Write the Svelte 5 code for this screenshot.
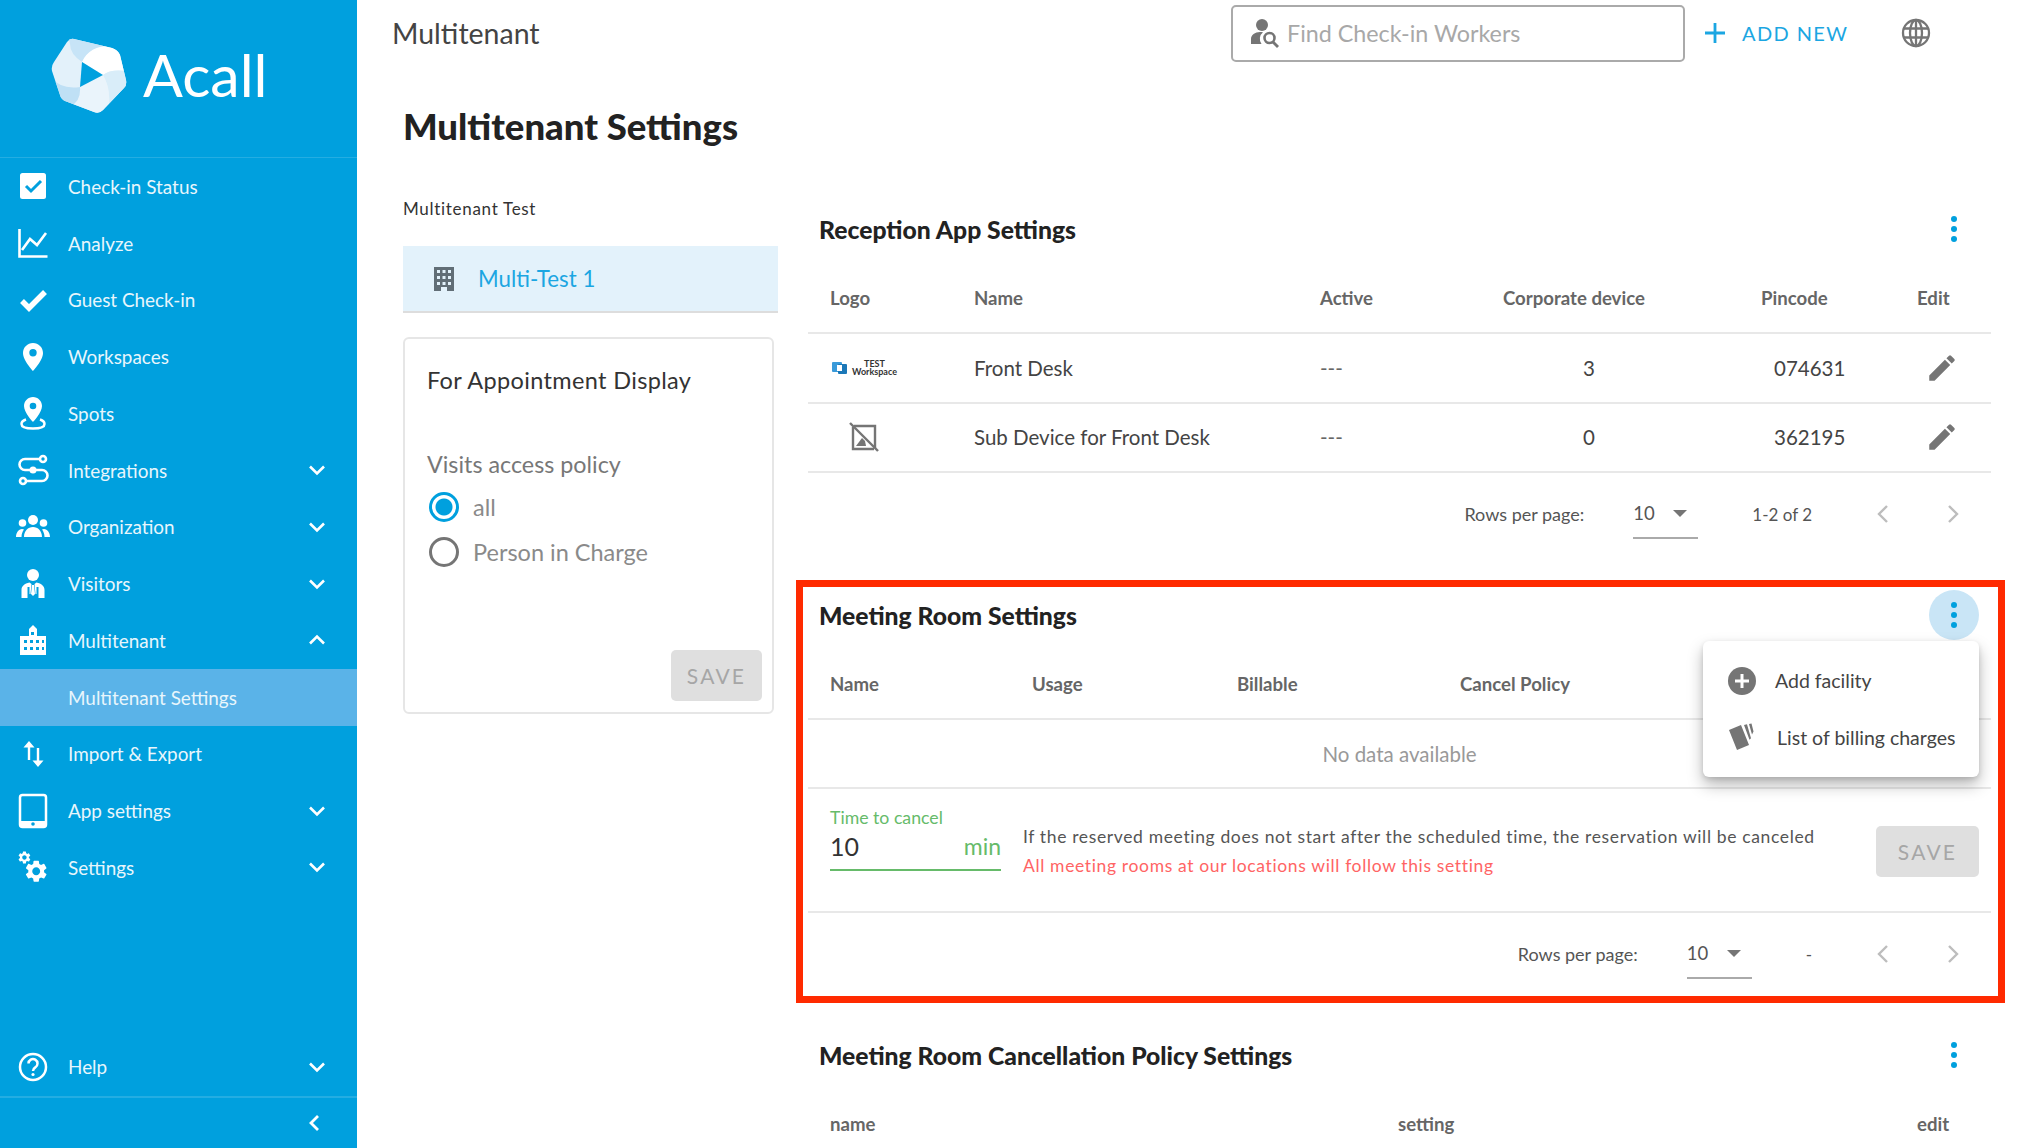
<script>
  const nav = [
    { icon: "status", label: "Check-in Status" },
    { icon: "analyze", label: "Analyze" },
    { icon: "check", label: "Guest Check-in" },
    { icon: "pin", label: "Workspaces" },
    { icon: "spot", label: "Spots" },
    { icon: "integrations", label: "Integrations", caret: "down" },
    { icon: "organization", label: "Organization", caret: "down" },
    { icon: "visitors", label: "Visitors", caret: "down" },
    { icon: "building", label: "Multitenant", caret: "up" },
    { label: "Multitenant Settings", active: true },
    { icon: "transfer", label: "Import & Export" },
    { icon: "phone", label: "App settings", caret: "down" },
    { icon: "gears", label: "Settings", caret: "down" }
  ];

  const gear = "M19.14 12.94c.04-.3.06-.61.06-.94 0-.32-.02-.64-.07-.94l2.03-1.58a.49.49 0 0 0 .12-.61l-1.92-3.32a.488.488 0 0 0-.59-.22l-2.39.96c-.5-.38-1.03-.7-1.62-.94l-.36-2.54a.484.484 0 0 0-.48-.41h-3.84c-.24 0-.43.17-.47.41l-.36 2.54c-.59.24-1.13.57-1.62.94l-2.39-.96c-.22-.08-.47 0-.59.22L2.74 8.87c-.12.21-.08.47.12.61l2.03 1.58c-.05.3-.09.63-.09.94s.02.64.07.94l-2.03 1.58a.49.49 0 0 0-.12.61l1.92 3.32c.12.22.37.29.59.22l2.39-.96c.5.38 1.03.7 1.62.94l.36 2.54c.05.24.24.41.48.41h3.84c.24 0 .44-.17.47-.41l.36-2.54c.59-.24 1.13-.56 1.62-.94l2.39.96c.22.08.47 0 .59-.22l1.92-3.32c.12-.22.07-.47-.12-.61l-2.01-1.58zM12 15.6c-1.98 0-3.6-1.62-3.6-3.6s1.62-3.6 3.6-3.6 3.6 1.62 3.6 3.6-1.62 3.6-3.6 3.6z";
  const pencil = "M3 17.25V21h3.75L17.81 9.94l-3.75-3.75L3 17.25zM20.71 7.04a1 1 0 0 0 0-1.41l-2.34-2.34a1 1 0 0 0-1.41 0l-1.83 1.83 3.75 3.75 1.83-1.83z";
</script>

{#snippet navIcon(name)}
  <svg class="nav-icon" viewBox="0 0 34 36" fill="#fff">
    {#if name === "status"}
      <rect x="4" y="5" width="26" height="26" rx="2.5" />
      <path d="M10 18l5 5 10-10" fill="none" stroke="#00a0de" stroke-width="3" />
    {:else if name === "analyze"}
      <path d="M3.5 4v27.5H31.5" fill="none" stroke="#fff" stroke-width="2.6" />
      <path d="M6 25l8-11 7 6 9-12" fill="none" stroke="#fff" stroke-width="2.6" />
    {:else if name === "check"}
      <path d="M6 19l7 7L29 10" fill="none" stroke="#fff" stroke-width="5.5" />
    {:else if name === "pin"}
      <path fill-rule="evenodd" d="M17 4C11.5 4 7 8.4 7 14c0 7.5 10 18 10 18s10-10.500 10-18C27 8.400 22.500 4 17 4zm0 13.500a3.700 3.700 0 1 1 0-7.400 3.700 3.700 0 0 1 0 7.400z" />
    {:else if name === "spot"}
      <path fill-rule="evenodd" d="M17 2c-5 0-9 4-9 9 0 6.500 9 16 9 16s9-9.500 9-16c0-5-4-9-9-9zm0 12.300a3.300 3.300 0 1 1 0-6.600 3.300 3.300 0 0 1 0 6.600z" />
      <path d="M10 24.500c-3 1-4.500 2.500-4.500 4.500 0 3 5 4.500 11.500 4.500s11.500-1.500 11.500-4.500c0-2-1.500-3.500-4.500-4.500" fill="none" stroke="#fff" stroke-width="2.500" />
    {:else if name === "integrations"}
      <g fill="none" stroke="#fff" stroke-width="2.600">
        <path d="M24 7H9a5.500 5.500 0 0 0 0 11h17a5.500 5.500 0 0 1 0 11H10" />
        <circle cx="27" cy="7" r="3" />
        <circle cx="7" cy="29" r="3" />
      </g>
      <circle cx="17" cy="18" r="3.500" />
    {:else if name === "organization"}
      <circle cx="17" cy="11" r="5" />
      <circle cx="6.500" cy="14" r="3.800" />
      <circle cx="27.500" cy="14" r="3.800" />
      <path d="M8 28c0-6 4-10 9-10s9 4 9 10zM0 28c0-4 2.500-8 6-8 1 0 1.500.2 2 .5-1.500 2-2.500 4.500-2.500 7.500zM34 28c0-4-2.500-8-6-8-1 0-1.500.2-2 .5 1.500 2 2.500 4.500 2.500 7.500z" />
    {:else if name === "visitors"}
      <circle cx="17" cy="9" r="6" />
      <path d="M5.500 32v-8c0-4 3-6.500 8-7.500l2 1.500-1 10h-1v-7h-2v11zM28.500 32v-8c0-4-3-6.500-8-7.500l-2 1.500 1 10h1v-7h2v11zM16 19h2l1 9-2 2-2-2z" />
    {:else if name === "building"}
      <path fill-rule="evenodd" d="M4 33V14h9V7l4-4 4 4v7h9v19zM8 18v3h3v-3zm6 0v3h3v-3zm6 0v3h3v-3zm6 0v3h2v-3zM8 25v3h3v-3zm6 0v3h3v-3zm6 0v3h3v-3zm6 0v3h2v-3zM15 10v3h3v-3z" />
    {:else if name === "transfer"}
      <path d="M13 24V10M22 12v14" fill="none" stroke="#fff" stroke-width="2.400" />
      <path d="M13 5l5.500 6.500h-11zM22 31l5.500-6.500h-11z" />
    {:else if name === "phone"}
      <rect x="4" y="2" width="26" height="32" rx="2.500" fill="none" stroke="#fff" stroke-width="2.500" />
      <path d="M4 28h26v6H4z" />
      <circle cx="17" cy="31" r="1.800" fill="#00a0de" />
    {:else if name === "gears"}
      <path d={gear} transform="translate(1 1) scale(.62)" />
      <path d={gear} transform="translate(7 9) scale(1.100)" />
    {:else if name === "help"}
      <circle cx="17" cy="18" r="13" fill="none" stroke="#fff" stroke-width="2.500" />
      <path d="M12.500 14.500a4.500 4.500 0 1 1 6.800 3.900c-1.500.9-2.300 1.700-2.300 3.600" fill="none" stroke="#fff" stroke-width="2.500" />
      <circle cx="17" cy="25.500" r="1.600" />
    {/if}
  </svg>
{/snippet}

{#snippet caret(dir)}
  <svg class="caret" class:up={dir === "up"} viewBox="0 0 18 12">
    <path d="M2 2.500l7 7 7-7" fill="none" stroke="#fff" stroke-width="2.600" />
  </svg>
{/snippet}

{#snippet kebab(open)}
  <button class="kebab" class:open aria-label="More">
    <i></i><i></i><i></i>
  </button>
{/snippet}

{#snippet pager(range)}
  <div class="pager">
    <span>Rows per page:</span>
    <div class="select">
      <span>10</span>
      <svg width="14" height="7" viewBox="0 0 14 7"><path d="M0 0h14L7 7z" fill="#757575" /></svg>
    </div>
    <span class="range">{range}</span>
    <svg class="page-arrow" width="12" height="20" viewBox="0 0 12 20"><path d="M10 2l-8 8 8 8" fill="none" stroke="#bdbdbd" stroke-width="2.400" /></svg>
    <svg class="page-arrow" width="12" height="20" viewBox="0 0 12 20"><path d="M2 2l8 8-8 8" fill="none" stroke="#bdbdbd" stroke-width="2.400" /></svg>
  </div>
{/snippet}

{#snippet editIcon()}
  <svg width="34" height="34" viewBox="0 0 24 24"><path d={pencil} fill="#757575" /></svg>
{/snippet}

<div class="app">
  <aside class="sidebar">
    <div class="brand">
      <svg width="84" height="84" viewBox="46 33 84 84">
        <defs>
          <clipPath id="logo-shape">
            <path d="M74 39L112 48Q118 50 120 55L126 80Q127 85 124 88L103 110Q99 114 94 112L65 101Q61 99 60 95L52 71Q51 66 54 62L67 42Q70 38 74 39Z" />
          </clipPath>
        </defs>
        <g clip-path="url(#logo-shape)">
          <rect x="46" y="33" width="84" height="84" fill="#e3f1fa" />
          <path d="M68 36H120L116 46Q92 44 82 62Q70 54 70 44Z" fill="#c7e4f7" />
          <path d="M82 62Q90 44 116 46L130 72Q114 68 103 75Z" fill="#fff" />
          <path d="M103 75Q112 68 130 72V95L107 116Q113 92 103 75Z" fill="#d9edf9" />
          <path d="M103 75Q113 92 107 116H88L70 106Q81 102 80 87Z" fill="#eaf4fb" />
          <path d="M80 87Q81 102 70 106L58 104L50 76Q60 90 80 87Z" fill="#bfe0f5" />
          <path d="M82 62L103 75L80 87Z" fill="#00a0de" />
        </g>
      </svg>
      <span class="brand-name">Acall</span>
    </div>

    <nav class="nav">
      {#each nav as item}
        <div class="nav-item" class:active={item.active}>
          <span class="nav-icon-slot">
            {#if item.icon}{@render navIcon(item.icon)}{/if}
          </span>
          <span class="nav-label">{item.label}</span>
          {#if item.caret}{@render caret(item.caret)}{/if}
        </div>
      {/each}
    </nav>

    <div class="sidebar-foot">
      <div class="nav-item">
        <span class="nav-icon-slot">{@render navIcon("help")}</span>
        <span class="nav-label">Help</span>
        {@render caret("down")}
      </div>
      <div class="collapse">
        <svg width="12" height="18" viewBox="0 0 12 18"><path d="M10 2L3 9l7 7" fill="none" stroke="#fff" stroke-width="2.800" /></svg>
      </div>
    </div>
  </aside>

  <div class="main">
    <header class="topbar">
      <div class="crumb">Multitenant</div>
      <div class="search">
        <svg width="32" height="32" viewBox="0 0 32 32" fill="#757575">
          <circle cx="13" cy="8" r="6" />
          <path d="M2 27v-5c0-4 4-7 9-7 1 0 2 .1 3 .3a8.500 8.500 0 0 0-1.500 11.700z" />
          <circle cx="20.500" cy="21" r="5" fill="none" stroke="#757575" stroke-width="2.600" />
          <path d="M24 25l5 5" stroke="#757575" stroke-width="2.800" />
        </svg>
        <span>Find Check-in Workers</span>
      </div>
      <div class="add-new">
        <svg width="22" height="22" viewBox="0 0 22 22"><path d="M11 1v20M1 11h20" stroke="#1ba6e2" stroke-width="2.800" /></svg>
        <span>ADD NEW</span>
      </div>
      <svg class="globe" width="30" height="30" viewBox="0 0 30 30" fill="none" stroke="#757575" stroke-width="2.300">
        <circle cx="15" cy="15" r="13" />
        <ellipse cx="15" cy="15" rx="6" ry="13" />
        <path d="M3 10.500h24M3 19.500h24M15 2v26" />
      </svg>
    </header>

    <main class="content">
      <h1>Multitenant Settings</h1>
      <div class="columns">
        <div class="left">
          <div class="group-label">Multitenant Test</div>
          <div class="tenant">
            <svg width="20" height="24" viewBox="0 0 20 24">
              <path fill="#616e76" fill-rule="evenodd" d="M0 0h20v24H13v-4H7v4H0zM3 3v3h3V3zm5.500 0v3h3V3zM14 3v3h3V3zM3 9v3h3V9zm5.500 0v3h3V9zM14 9v3h3V9zM3 15v3h3v-3zm5.500 0v3h3v-3zM14 15v3h3v-3z" />
            </svg>
            <span>Multi-Test 1</span>
          </div>
          <div class="policy-card">
            <div class="policy-title">For Appointment Display</div>
            <div class="policy-label">Visits access policy</div>
            <label class="radio"><i class="dot on"></i>all</label>
            <label class="radio"><i class="dot"></i>Person in Charge</label>
            <div class="policy-actions"><button class="save">SAVE</button></div>
          </div>
        </div>

        <div class="right">
          <section>
            <div class="section-head">
              <h2>Reception App Settings</h2>
              {@render kebab(false)}
            </div>
            <table class="reception">
              <thead>
                <tr>
                  <th>Logo</th><th>Name</th><th>Active</th><th>Corporate device</th><th>Pincode</th><th>Edit</th>
                </tr>
              </thead>
              <tbody>
                <tr>
                  <td>
                    <div class="mini-logo">
                      <svg width="16" height="14" viewBox="0 0 16 14">
                        <rect x="0" y="1" width="10" height="10" rx="1" fill="#3a9ad9" />
                        <rect x="6" y="3" width="9" height="10" rx="1" fill="#1b78b8" />
                        <rect x="5" y="4" width="5" height="6" fill="#fff" />
                      </svg>
                      <span>TEST<br />Workspace</span>
                    </div>
                  </td>
                  <td>Front Desk</td>
                  <td class="muted">---</td>
                  <td class="count">3</td>
                  <td class="pin">074631</td>
                  <td class="edit">{@render editIcon()}</td>
                </tr>
                <tr>
                  <td>
                    <svg class="no-image" width="30" height="30" viewBox="0 0 30 30" fill="none" stroke="#757575" stroke-width="2.400">
                      <path d="M5 4h21v22M25 27H4V5" />
                      <path d="M1 1l28 28" />
                      <path d="M7 24l6-8 3 3 1 5z" fill="#757575" stroke="none" />
                    </svg>
                  </td>
                  <td>Sub Device for Front Desk</td>
                  <td class="muted">---</td>
                  <td class="count">0</td>
                  <td class="pin">362195</td>
                  <td class="edit">{@render editIcon()}</td>
                </tr>
              </tbody>
            </table>
            {@render pager("1-2 of 2")}
          </section>

          <section class="flagged">
            <div class="section-head">
              <h2>Meeting Room Settings</h2>
              {@render kebab(true)}
            </div>
            <table class="rooms">
              <thead>
                <tr><th>Name</th><th>Usage</th><th>Billable</th><th>Cancel Policy</th><th></th></tr>
              </thead>
              <tbody>
                <tr><td colspan="5" class="empty">No data available</td></tr>
              </tbody>
            </table>
            <div class="cancel-row">
              <div class="time-field">
                <div class="field-label">Time to cancel</div>
                <div class="field-value"><span>10</span><em>min</em></div>
              </div>
              <div class="cancel-note">
                <p>If the reserved meeting does not start after the scheduled time, the reservation will be canceled</p>
                <p class="warn">All meeting rooms at our locations will follow this setting</p>
              </div>
              <button class="save">SAVE</button>
            </div>
            {@render pager("-")}

            <div class="menu">
              <div class="menu-item">
                <svg width="28" height="28" viewBox="0 0 28 28">
                  <circle cx="14" cy="14" r="14" fill="#757575" />
                  <path d="M14 7v14M7 14h14" stroke="#fff" stroke-width="3" />
                </svg>
                <span>Add facility</span>
              </div>
              <div class="menu-item">
                <svg width="30" height="30" viewBox="0 0 30 30" fill="#757575">
                  <path d="M1 7l12-5 8 20-12 5z" />
                  <path d="M16 2l3-.8 4 14-1.500 1.500zM21 1l2.500-.5 2 8-1.500 3z" />
                </svg>
                <span>List of billing charges</span>
              </div>
            </div>
            <div class="flag-frame"></div>
          </section>

          <section>
            <div class="section-head">
              <h2>Meeting Room Cancellation Policy Settings</h2>
              {@render kebab(false)}
            </div>
            <table class="policies">
              <thead>
                <tr><th>name</th><th>setting</th><th>edit</th></tr>
              </thead>
            </table>
          </section>
        </div>
      </div>
    </main>
  </div>
</div>

<style>
  :global(body) {
    margin: 0;
    background: #fff;
  }

  .app {
    display: flex;
    width: 2034px;
    height: 1148px;
    overflow: hidden;
    font-family: Lato, "Noto Sans", sans-serif;
    color: #444;
  }

  /* sidebar */
  .sidebar {
    flex: none;
    width: 357px;
    display: flex;
    flex-direction: column;
    background: #00a0de;
    color: #e8f6fc;
  }

  .brand {
    height: 158px;
    box-sizing: border-box;
    border-bottom: 1px solid rgba(255, 255, 255, 0.14);
    padding: 33px 0 0 46px;
    display: flex;
    align-items: flex-start;
    gap: 13px;
  }

  .brand-name {
    font-size: 59px;
    line-height: 84px;
    font-weight: 400;
    color: #fff;
  }

  .nav-item {
    height: 56.75px;
    display: flex;
    align-items: center;
    font-size: 18.9px;
  }

  .nav-item.active {
    background: #5ab3e8;
  }

  .nav-icon-slot {
    flex: none;
    width: 34px;
    height: 36px;
    margin: 0 18px 0 16px;
  }

  .nav-icon {
    display: block;
    width: 34px;
    height: 36px;
  }

  .nav-label {
    flex: 1;
  }

  .caret {
    width: 18px;
    height: 12px;
    margin-right: 31px;
  }

  .caret.up {
    transform: rotate(180deg);
  }

  .sidebar-foot {
    margin-top: auto;
  }

  .sidebar-foot .nav-item {
    margin-bottom: 1px;
  }

  .collapse {
    height: 52px;
    box-sizing: border-box;
    border-top: 2px solid rgba(255, 255, 255, 0.14);
    display: flex;
    align-items: center;
    justify-content: flex-end;
    padding-right: 37px;
  }

  /* top bar */
  .main {
    flex: 1;
    min-width: 0;
  }

  .topbar {
    height: 66px;
    display: flex;
    align-items: center;
    padding-left: 35px;
  }

  .crumb {
    width: 839px;
    margin-bottom: 1px;
    font-size: 28.5px;
    color: #444;
  }

  .search {
    width: 454px;
    height: 57px;
    box-sizing: border-box;
    border: 2px solid #aaa;
    border-radius: 5px;
    display: flex;
    align-items: center;
    gap: 6px;
    padding-left: 16px;
    font-size: 23.3px;
    color: #a8a8a8;
  }

  .search span {
    margin-bottom: 1px;
  }

  .add-new {
    display: flex;
    align-items: center;
    gap: 16px;
    margin-left: 19px;
    color: #1ba6e2;
    font-size: 20px;
    letter-spacing: 1.4px;
  }

  .globe {
    margin-left: 53px;
  }

  /* content */
  .content {
    padding-left: 46px;
  }

  h1 {
    margin: 0;
    height: 133px;
    box-sizing: border-box;
    padding-top: 37px;
    font-size: 36.5px;
    line-height: 46px;
    font-weight: 900;
    color: #222;
  }

  .columns {
    display: flex;
    align-items: flex-start;
  }

  .left {
    flex: none;
    width: 375px;
    margin-right: 30px;
  }

  .group-label {
    height: 47px;
    line-height: 20px;
    font-size: 17px;
    letter-spacing: 0.7px;
    color: #333;
  }

  .tenant {
    height: 67px;
    box-sizing: border-box;
    border-bottom: 2px solid #ddd;
    background: #e3f2fb;
    display: flex;
    align-items: center;
    gap: 24px;
    padding-left: 31px;
    font-size: 22.3px;
    color: #1ba6e2;
  }

  .policy-card {
    width: 371px;
    height: 377px;
    box-sizing: border-box;
    margin-top: 24px;
    border: 2px solid #e6e6e6;
    border-radius: 6px;
    padding: 26px 10px 0 22px;
    display: flex;
    flex-direction: column;
  }

  .policy-title {
    font-size: 23.5px;
    letter-spacing: 0.35px;
    line-height: 30px;
    color: #333;
  }

  .policy-label {
    margin-top: 54px;
    margin-bottom: 5px;
    font-size: 23.3px;
    line-height: 30px;
    color: #777;
  }

  .radio {
    display: flex;
    align-items: center;
    gap: 14px;
    height: 45.5px;
    font-size: 23.5px;
    color: #8a8a8a;
  }

  .dot {
    box-sizing: border-box;
    width: 30px;
    height: 30px;
    margin-left: 2px;
    border: 3px solid #757575;
    border-radius: 50%;
  }

  .dot.on {
    border-color: #00a0de;
    background: radial-gradient(circle, #00a0de 0 8px, #fff 9px);
  }

  .policy-actions {
    margin-top: auto;
    margin-bottom: 11px;
    display: flex;
    justify-content: flex-end;
  }

  .save {
    width: 91px;
    height: 51px;
    border: 0;
    border-radius: 5px;
    background: #dfdfdf;
    color: #a6a6a6;
    font: 21px Lato, sans-serif;
    letter-spacing: 2.2px;
  }

  /* sections */
  .right {
    flex: none;
    width: 1183px;
  }

  section {
    position: relative;
    margin-bottom: 30px;
  }

  .section-head {
    height: 60px;
    margin-bottom: 5px;
    display: flex;
    align-items: center;
    justify-content: space-between;
    padding-left: 11px;
  }

  h2 {
    margin: 0;
    font-size: 24.7px;
    font-weight: 900;
    color: #222;
  }

  .kebab {
    box-sizing: border-box;
    width: 50px;
    height: 50px;
    margin-right: 12px;
    padding: 0;
    border: 0;
    border-radius: 50%;
    background: transparent;
    display: flex;
    flex-direction: column;
    align-items: center;
    justify-content: center;
    gap: 4px;
  }

  .kebab.open {
    background: #c9e5f6;
  }

  .kebab i {
    width: 6px;
    height: 6px;
    border-radius: 50%;
    background: #00a0de;
  }

  table {
    width: 100%;
    table-layout: fixed;
    border-collapse: separate;
    border-spacing: 0;
  }

  th {
    height: 68px;
    padding: 0;
    border-bottom: 2px solid #e8e8e8;
    text-align: left;
    font-size: 18.6px;
    font-weight: 700;
    color: #666;
  }

  td {
    height: 67.5px;
    padding: 0;
    border-bottom: 2px solid #e8e8e8;
    font-size: 20.5px;
    color: #444;
  }

  th:first-child,
  td:first-child {
    padding-left: 22px;
  }

  .reception th:nth-child(1) { width: 144px; }
  .reception th:nth-child(2) { width: 346px; }
  .reception th:nth-child(3) { width: 183px; }
  .reception th:nth-child(4) { width: 258px; }
  .reception th:nth-child(5) { width: 156px; }

  .muted {
    color: #666;
  }

  .count {
    padding-left: 80px;
  }

  .pin {
    padding-left: 13px;
  }

  .edit svg {
    display: block;
    margin-left: 8px;
  }

  .mini-logo {
    display: flex;
    align-items: center;
    gap: 4px;
    margin-left: 2px;
  }

  .mini-logo span {
    font-size: 9px;
    line-height: 8px;
    font-weight: 700;
    color: #333;
    text-align: center;
  }

  .no-image {
    display: block;
    margin-left: 19px;
  }

  .pager {
    height: 82px;
    box-sizing: border-box;
    display: flex;
    align-items: center;
    justify-content: flex-end;
    padding-right: 32px;
    font-size: 18px;
    color: #555;
  }

  .select {
    box-sizing: border-box;
    width: 65px;
    height: 49px;
    margin-left: 49px;
    border-bottom: 2px solid #aaa;
    display: flex;
    align-items: center;
    justify-content: space-between;
    padding-right: 11px;
    font-size: 18.5px;
  }

  .range {
    padding: 0 65px 0 54px;
    font-size: 17px;
  }

  .page-arrow:last-child {
    margin-left: 58px;
  }

  .rooms th:nth-child(1) { width: 202px; }
  .rooms th:nth-child(2) { width: 205px; }
  .rooms th:nth-child(3) { width: 223px; }
  .rooms th:nth-child(4) { width: 260px; }

  .empty {
    height: 67px;
    padding-left: 0 !important;
    text-align: center;
    color: #999;
  }

  .cancel-row {
    height: 124px;
    box-sizing: border-box;
    border-bottom: 2px solid #e8e8e8;
    display: flex;
    align-items: flex-start;
    padding: 0 12px 0 22px;
  }

  .time-field {
    flex: none;
    width: 171px;
    margin-top: 18px;
    border-bottom: 2px solid #66bb6a;
  }

  .field-label {
    font-size: 17.7px;
    line-height: 22px;
    color: #66bb6a;
  }

  .field-value {
    display: flex;
    align-items: center;
    justify-content: space-between;
    height: 40px;
    box-sizing: border-box;
    padding-bottom: 7px;
    font-size: 25px;
    color: #333;
  }

  .field-value em {
    font-style: normal;
    font-size: 23px;
    color: #66bb6a;
  }

  .cancel-note {
    margin: 37px 0 0 22px;
    flex: 1;
  }

  .cancel-note p {
    margin: 0 0 7px;
    height: 22px;
    line-height: 22px;
    font-size: 17.5px;
    letter-spacing: 0.64px;
    color: #555;
  }

  .cancel-note .warn {
    color: #ff6464;
  }

  .cancel-row .save {
    flex: none;
    width: 103px;
    margin-top: 37px;
  }

  .policies th:nth-child(1) { width: 568px; }
  .policies th:nth-child(2) { width: 519px; }

  /* open dropdown over the table */
  .menu {
    position: absolute;
    top: 56px;
    right: 12px;
    width: 276px;
    height: 136px;
    box-sizing: border-box;
    padding-top: 11px;
    border-radius: 6px;
    background: #fff;
    box-shadow: 0 8px 16px rgba(0, 0, 0, 0.28), 0 2px 5px rgba(0, 0, 0, 0.12);
  }

  .menu-item {
    height: 57px;
    display: flex;
    align-items: center;
    padding-left: 25px;
    gap: 19px;
    font-size: 19.5px;
    color: #444;
  }

  .menu-item svg {
    flex: none;
  }

  /* red annotation drawn over the section */
  .flag-frame {
    position: absolute;
    inset: -5px -14px -8px -12px;
    border: 7px solid #ff2a00;
    pointer-events: none;
  }
</style>
